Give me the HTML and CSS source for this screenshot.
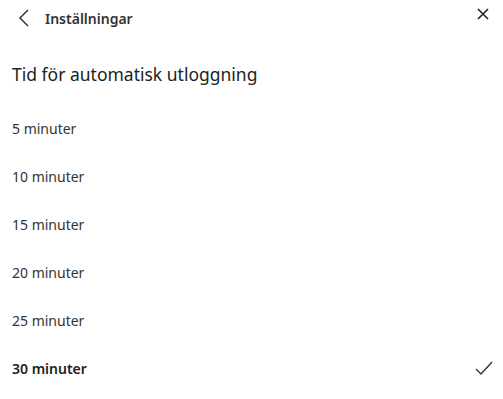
FILE: index.html
```html
<!DOCTYPE html>
<html lang="sv">
<head>
<meta charset="utf-8">
<link rel="stylesheet" href="styles.css">
</head>
<body>
<div class="panel">
  <header class="header">
    <button class="back" aria-label="Tillbaka">
      <svg width="12" height="18" viewBox="0 0 12 18"><path d="M10 1 L2 9 L10 17" fill="none" stroke="#333" stroke-width="1.5"/></svg>
    </button>
    <span class="title">Inställningar</span>
    <button class="close" aria-label="Stäng">
      <svg width="12" height="12" viewBox="0 0 12 12"><path d="M1 1 L11 11 M11 1 L1 11" fill="none" stroke="#222" stroke-width="1.6"/></svg>
    </button>
  </header>
  <h1 class="heading">Tid för automatisk utloggning</h1>
  <ul class="options">
    <li class="option">5 minuter</li>
    <li class="option">10 minuter</li>
    <li class="option">15 minuter</li>
    <li class="option">20 minuter</li>
    <li class="option">25 minuter</li>
    <li class="option selected">30 minuter
      <svg class="check" width="18" height="14" viewBox="0 0 18 14"><path d="M1 8 L6 13 L17 1" fill="none" stroke="#333" stroke-width="1.4"/></svg>
    </li>
  </ul>
</div>
</body>
</html>
```
FILE: styles.css
```css
* { box-sizing: border-box; }
html, body { margin: 0; padding: 0; background: #fff; }
body { font-family: "Noto Sans", "Open Sans", sans-serif; color: #333; }
.panel { width: 503px; height: 399px; }
.header { display: flex; align-items: center; height: 36px; padding: 0 12px 0 18px; }
.back, .close { background: none; border: 0; padding: 0; display: flex; cursor: pointer; }
.back { margin-right: 15px; }
.title { font-size: 14px; font-weight: 600; color: #333; flex: 1; }
.close { align-self: flex-start; margin-top: 8px; margin-right: 2px; }
.heading { margin: 24px 0 0 12px; font-size: 17.5px; font-weight: 400; color: #222; line-height: 28px; }
.options { list-style: none; margin: 16px 0 0; padding: 0 10px 0 12px; }
.option { display: flex; align-items: center; justify-content: space-between; height: 48px; font-size: 14px; color: #333; }
.option.selected { font-weight: 600; color: #222; }
.check { margin-top: 0; }
```
